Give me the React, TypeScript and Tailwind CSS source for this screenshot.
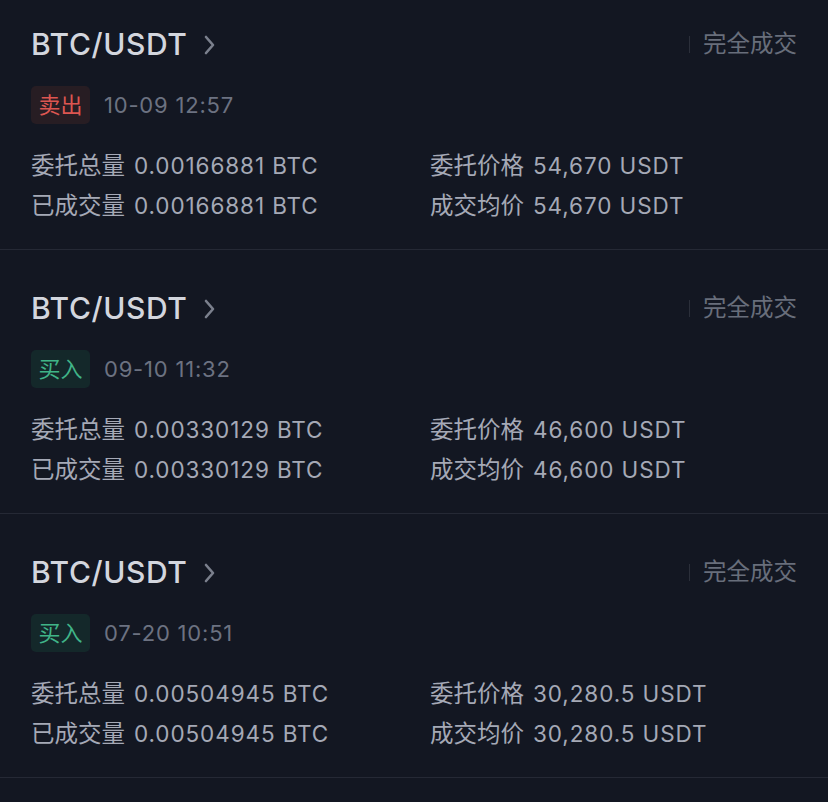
import React from "react";

type Order = {
  side: "buy" | "sell";
  time: string;
  amount: string;
  price: string;
};

const orders: Order[] = [
  { side: "sell", time: "10-09 12:57", amount: "0.00166881 BTC", price: "54,670 USDT" },
  { side: "buy", time: "09-10 11:32", amount: "0.00330129 BTC", price: "46,600 USDT" },
  { side: "buy", time: "07-20 10:51", amount: "0.00504945 BTC", price: "30,280.5 USDT" },
];

function Chevron() {
  return (
    <svg width="14" height="24" viewBox="0 0 14 24" fill="none" className="ml-[14px] mt-[2px]">
      <path d="M4 4 L11 12 L4 20" stroke="#7b808d" strokeWidth="2.6" strokeLinecap="round" strokeLinejoin="round" />
    </svg>
  );
}

function Field({ label, value }: { label: string; value: string }) {
  return (
    <div className="flex items-center">
      <span className="text-[23.5px]">{label}</span>
      <span className="ml-[9px] tracking-[0.9px]">{value}</span>
    </div>
  );
}

function Card({ o, first }: { o: Order; first: boolean }) {
  const sell = o.side === "sell";
  return (
    <div className={`border-b border-[#252935] px-[31px] pb-[23px] ${first ? "pt-[26px]" : "pt-[40px]"}`}>
      <div className="flex h-[36px] items-center justify-between">
        <div className="flex items-center">
          <span className="text-[30px] font-medium leading-[36px] text-[#d3d6de] tracking-[0.6px]">BTC/USDT</span>
          <Chevron />
        </div>
        <div className="flex items-center">
          <div className="h-[17px] w-px bg-[#2b2f3a]" />
          <span className="ml-[13px] text-[23.5px] leading-[36px] text-[#686e7b]">完全成交</span>
        </div>
      </div>
      <div className="mt-[24px] flex h-[38px] items-center">
        <span
          className={
            sell
              ? "flex h-[38px] w-[59px] items-center justify-center rounded-[5px] bg-[#271d23] text-[22px] text-[#dc5651]"
              : "flex h-[38px] w-[59px] items-center justify-center rounded-[5px] bg-[#14282a] text-[22px] text-[#40b488]"
          }
        >
          {sell ? "卖出" : "买入"}
        </span>
        <span className="ml-[14px] text-[22px] tracking-[0.8px] text-[#6c7281]">{o.time}</span>
      </div>
      <div className="mt-[22px] grid grid-cols-[399px_1fr] text-[22.5px] leading-[40px] text-[#a5a9b6]">
        <Field label="委托总量" value={o.amount} />
        <Field label="委托价格" value={o.price} />
        <Field label="已成交量" value={o.amount} />
        <Field label="成交均价" value={o.price} />
      </div>
    </div>
  );
}

export default function App() {
  return (
    <div
      className="h-[802px] w-[828px] overflow-hidden bg-[#131722]"
      style={{ fontFamily: '"Inter", "Noto Sans CJK SC", sans-serif' }}
    >
      {orders.map((o, i) => (
        <Card key={i} o={o} first={i === 0} />
      ))}
    </div>
  );
}
